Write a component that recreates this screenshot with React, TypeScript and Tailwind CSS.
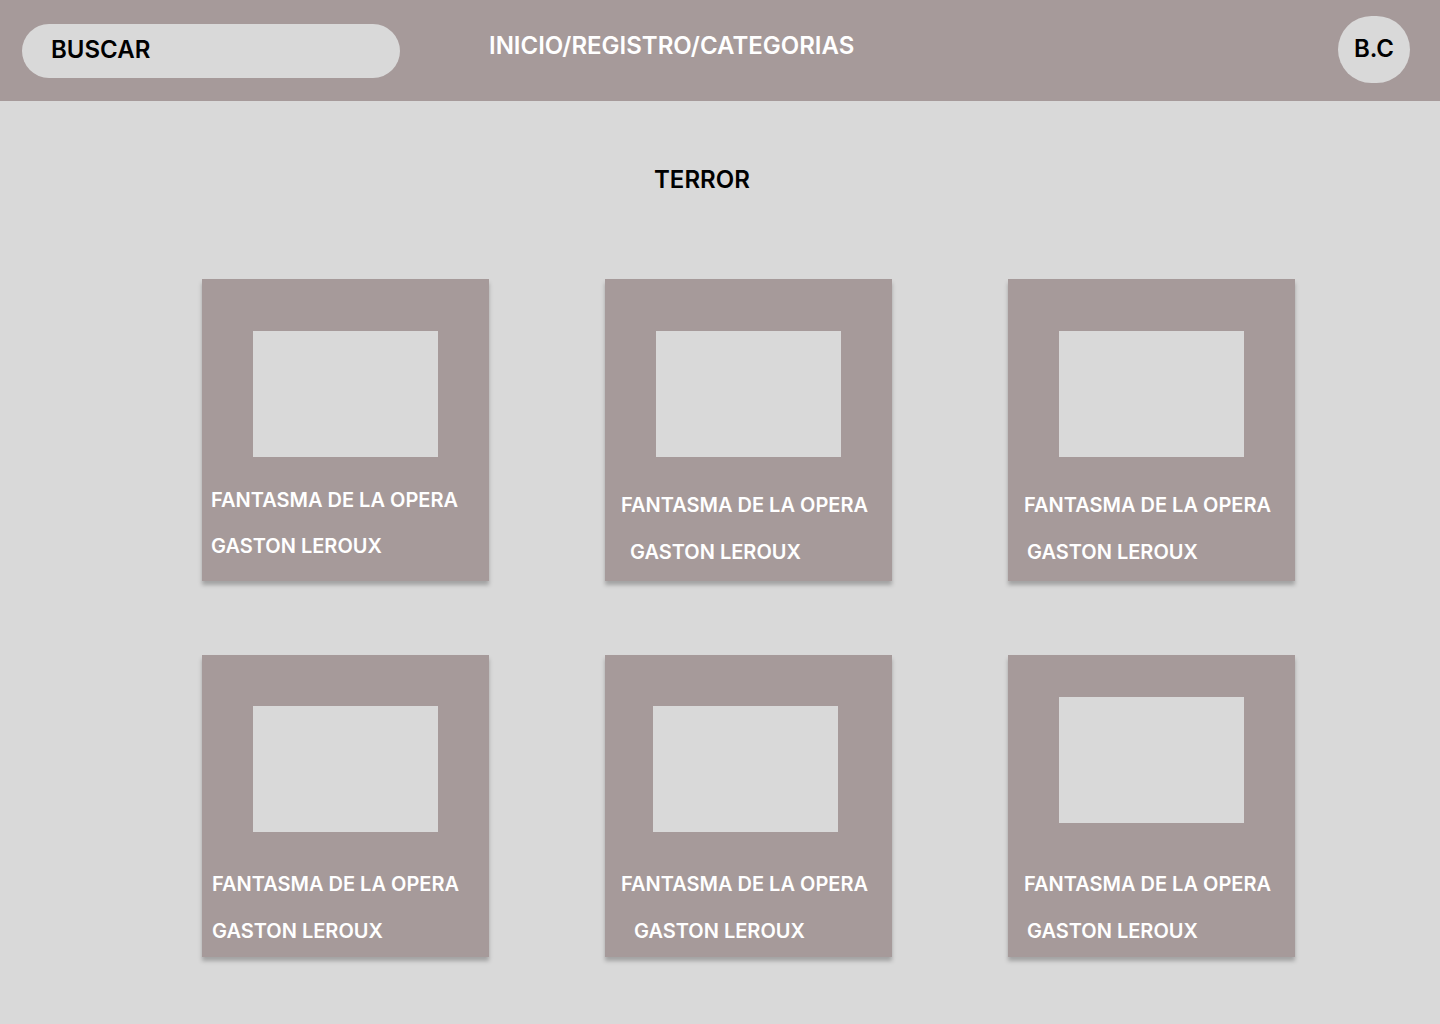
type Book = {
    id: number;
    img: string;
    title: string;
    author: string;
};

const books: Book[] = [
    { id: 1, img: 'mt-[52px] ml-[51px]', title: 'mt-[31px] ml-[9px]', author: 'mt-[22px] ml-[9px]' },
    { id: 2, img: 'mt-[52px] ml-[51px]', title: 'mt-[36px] ml-[16px]', author: 'mt-[23px] ml-[25px]' },
    { id: 3, img: 'mt-[52px] ml-[51px]', title: 'mt-[36px] ml-[16px]', author: 'mt-[23px] ml-[19px]' },
    { id: 4, img: 'mt-[51px] ml-[51px]', title: 'mt-[40px] ml-[10px]', author: 'mt-[23px] ml-[10px]' },
    { id: 5, img: 'mt-[51px] ml-[48px]', title: 'mt-[40px] ml-[16px]', author: 'mt-[23px] ml-[29px]' },
    { id: 6, img: 'mt-[42px] ml-[51px]', title: 'mt-[49px] ml-[16px]', author: 'mt-[23px] ml-[19px]' },
];

function BookCard({ book }: { book: Book }) {
    return (
        <div className="flex h-[302px] w-[287px] flex-col bg-[#a69a9a] shadow-[0_4px_4px_rgba(0,0,0,0.25)]">
            <div className={`h-[126px] w-[185px] bg-[#d9d9d9] ${book.img}`} />
            <div className={`text-[20px] leading-[24px] font-semibold text-white ${book.title}`}>
                FANTASMA DE LA OPERA
            </div>
            <div className={`text-[20px] leading-[24px] font-semibold text-white ${book.author}`}>
                GASTON LEROUX
            </div>
        </div>
    );
}

export default function App() {
    return (
        <div className="min-h-[1024px] w-[1440px] bg-[#d9d9d9] font-['Inter',sans-serif]">
            <header className="flex h-[101px] items-start bg-[#a69a9a]">
                <div className="ml-[22px] mt-[24px] flex h-[54px] w-[378px] items-center rounded-full bg-[#d9d9d9] pb-[3px] pl-[29px]">
                    <span className="text-[24px] leading-[29px] font-semibold text-black">BUSCAR</span>
                </div>
                <nav className="ml-[89px] mt-[31px] text-[24px] leading-[29px] font-semibold text-white">
                    INICIO/REGISTRO/CATEGORIAS
                </nav>
                <div className="ml-auto mr-[30px] mt-[16px] flex h-[67px] w-[72px] items-center justify-center rounded-full bg-[#d9d9d9] pb-[2px]">
                    <span className="text-[24px] leading-[29px] font-semibold text-black">B.C</span>
                </div>
            </header>

            <main className="pb-[66px]">
                <h1 className="pl-[654px] pt-[64px] text-[24px] leading-[29px] font-semibold text-black">TERROR</h1>
                <div className="mt-[85px] grid w-fit grid-cols-3 gap-x-[116px] gap-y-[74px] pl-[202px]">
                    {books.map((b) => (
                        <BookCard key={b.id} book={b} />
                    ))}
                </div>
            </main>
        </div>
    );
}
